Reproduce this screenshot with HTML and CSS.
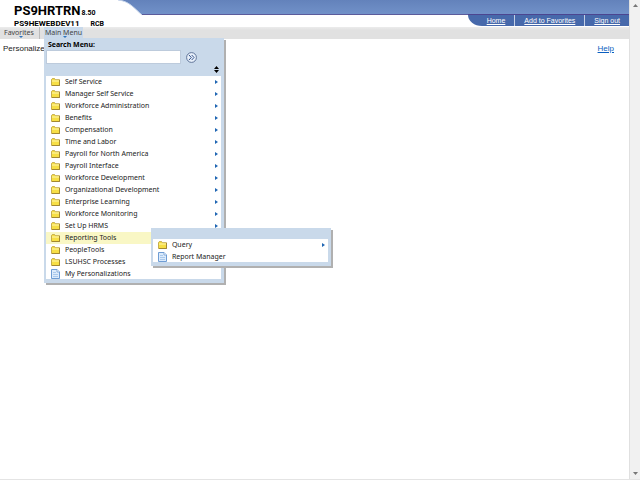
FILE: index.html
```
<!DOCTYPE html>
<html lang="en">
<head>
    <meta charset="UTF-8">
    <meta name="viewport" content="width=device-width, initial-scale=1.0">
    <title>PS9HRTRN</title>
    <link rel="stylesheet" href="styles.css">
</head>
<body>
    <!-- Shared icons -->
    <svg class="sprite" aria-hidden="true">
        <symbol id="folder" viewBox="0 0 9 8">
            <path d="M.5 7.5V1.5L1.3.6H3.6L4.4 1.7H8.5V7.5Z" fill="#f7df45" stroke="#b89c38" stroke-width=".8"/>
            <path d="M1 3H8" stroke="#fff8b0" stroke-width="1"/>
            <path d="M8.6 2V7.6H1" fill="none" stroke="#8f7424" stroke-width=".7"/>
        </symbol>
        <symbol id="page" viewBox="0 0 9 10">
            <path d="M.5.5H6L8.5 3V9.5H.5Z" fill="#dcebfb" stroke="#6f9dd4"/>
            <path d="M6 .5V3H8.5" fill="#fff" stroke="#6f9dd4" stroke-width=".8"/>
            <path d="M2 3.5H5M2 5.5H7M2 7.5H7" stroke="#9dc0e8" stroke-width=".8"/>
        </symbol>
    </svg>

    <div class="page">
        <div class="content">
            <!-- Header -->
            <header class="header">
                <div class="logo">
                    <div class="db-name">PS9HRTRN<span class="version">8.50</span></div>
                    <div class="server"><span>PS9HEWEBDEV11</span><span class="user">RCB</span></div>
                </div>
                <svg class="curve" viewBox="0 0 50 27" aria-hidden="true">
                    <path d="M0 0H4C15 1 20 8 28 15V27H0Z" fill="#fff"/>
                    <path d="M4 0C15 1 20 8 28 15" fill="none" stroke="#c7d5ea"/>
                </svg>
                <nav class="top-links">
                    <a href="#">Home</a>
                    <a href="#">Add to Favorites</a>
                    <a href="#">Sign out</a>
                </nav>
            </header>

            <!-- Menu bar -->
            <div class="menu-bar">
                <button class="menu-button">Favorites</button>
                <div class="menu-wrap">
                    <button class="menu-button active">Main Menu</button>

                    <div class="menu main-menu">
                        <form class="search">
                            <label for="search-menu">Search Menu:</label>
                            <div class="search-row">
                                <input type="text" id="search-menu">
                                <button type="button" class="go" aria-label="Search">
                                    <svg viewBox="0 0 11 11">
                                        <circle cx="5.5" cy="5.5" r="4.9" fill="#e8f0fa" stroke="#53698e" stroke-width=".9"/>
                                        <path d="M3 3L5.3 5.5L3 8M5.7 3L8 5.5L5.7 8" fill="none" stroke="#35548c"/>
                                    </svg>
                                </button>
                            </div>
                            <button type="button" class="sort" aria-label="Sort">
                                <svg viewBox="0 0 5 7"><path d="M0 3L2.5 0L5 3ZM0 4L2.5 7L5 4Z"/></svg>
                            </button>
                        </form>
                        <ul class="items">
                            <li class="sub"><svg class="folder"><use href="#folder"/></svg><a href="#">Self Service</a></li>
                            <li class="sub"><svg class="folder"><use href="#folder"/></svg><a href="#">Manager Self Service</a></li>
                            <li class="sub"><svg class="folder"><use href="#folder"/></svg><a href="#">Workforce Administration</a></li>
                            <li class="sub"><svg class="folder"><use href="#folder"/></svg><a href="#">Benefits</a></li>
                            <li class="sub"><svg class="folder"><use href="#folder"/></svg><a href="#">Compensation</a></li>
                            <li class="sub"><svg class="folder"><use href="#folder"/></svg><a href="#">Time and Labor</a></li>
                            <li class="sub"><svg class="folder"><use href="#folder"/></svg><a href="#">Payroll for North America</a></li>
                            <li class="sub"><svg class="folder"><use href="#folder"/></svg><a href="#">Payroll Interface</a></li>
                            <li class="sub"><svg class="folder"><use href="#folder"/></svg><a href="#">Workforce Development</a></li>
                            <li class="sub"><svg class="folder"><use href="#folder"/></svg><a href="#">Organizational Development</a></li>
                            <li class="sub"><svg class="folder"><use href="#folder"/></svg><a href="#">Enterprise Learning</a></li>
                            <li class="sub"><svg class="folder"><use href="#folder"/></svg><a href="#">Workforce Monitoring</a></li>
                            <li class="sub"><svg class="folder"><use href="#folder"/></svg><a href="#">Set Up HRMS</a></li>
                            <li class="sub open">
                                <svg class="folder"><use href="#folder"/></svg><a href="#">Reporting Tools</a>
                                <div class="menu sub-menu">
                                    <ul class="items">
                                        <li class="sub"><svg class="folder"><use href="#folder"/></svg><a href="#">Query</a></li>
                                        <li><svg class="doc"><use href="#page"/></svg><a href="#">Report Manager</a></li>
                                    </ul>
                                </div>
                            </li>
                            <li class="sub"><svg class="folder"><use href="#folder"/></svg><a href="#">PeopleTools</a></li>
                            <li class="sub"><svg class="folder"><use href="#folder"/></svg><a href="#">LSUHSC Processes</a></li>
                            <li><svg class="doc"><use href="#page"/></svg><a href="#">My Personalizations</a></li>
                        </ul>
                    </div>
                </div>
            </div>

            <!-- Home page links -->
            <main class="home">
                <span>Personalize</span>
                <a href="#">Help</a>
            </main>
        </div>

        <!-- Scroll track -->
        <div class="scroll-track" aria-hidden="true">
            <svg viewBox="0 0 5 3"><path d="M0 3L2.5 0L5 3Z" fill="#777"/></svg>
            <svg viewBox="0 0 5 3"><path d="M0 0L2.5 3L5 0Z" fill="#777"/></svg>
        </div>
    </div>
</body>
</html>
```
FILE: styles.css
```
* {
    box-sizing: border-box;
}

body {
    margin: 0;
    font-family: "Liberation Sans", Arial, sans-serif;
    font-size: 8px;
    color: #222;
    background-color: #fff;
}

button {
    margin: 0;
    padding: 0;
    border: none;
    background: none;
    font: inherit;
    color: inherit;
    cursor: pointer;
}

.sprite {
    display: none;
}

.page {
    display: flex;
    min-height: 100vh;
    border-bottom: 1px solid #e4e4e4;
}

.content {
    flex: 1;
}

/* Header */
.header {
    display: flex;
    height: 27px;
    background: linear-gradient(#6382bb, #7191c8 14px, #5b5b9b 14px, #5b5b9b 15px, #fff 15px);
}

.logo {
    width: 114px;
    padding: 4px 0 0 14px;
    background-color: #fff;
    color: #000;
    font-family: Roboto, Arial, sans-serif;
    font-weight: bold;
    white-space: nowrap;
}

.db-name {
    font-size: 13px;
    line-height: 13px;
}

.version {
    margin-left: 1px;
    font-size: 7px;
}

.server {
    display: flex;
    gap: 11px;
    line-height: 8px;
}

.user {
    font-size: 7px;
}

.curve {
    width: 50px;
    height: 27px;
}

.top-links {
    display: flex;
    align-self: flex-start;
    margin: 14px 0 0 auto;
    height: 12px;
    padding-left: 10px;
    border-top: 1px solid #4c4590;
    border-bottom-left-radius: 14px 11px;
    background-color: #4769ab;
    line-height: 12px;
}

.top-links a {
    padding: 0 9px;
    color: #fff;
    font-size: 7px;
}

.top-links a + a {
    border-left: 1px solid #c5d0e6;
}

/* Menu bar */
.menu-bar {
    display: flex;
    height: 12px;
    padding-left: 3px;
    background: linear-gradient(#ececec, #e1e1e1 3px);
}

.menu-button {
    position: relative;
    height: 11px;
    padding: 0 1px;
    font-family: "Noto Sans", Tahoma, sans-serif;
    font-size: 7px;
    line-height: 10px;
    color: #444;
}

.menu-button::after {
    content: "";
    position: absolute;
    left: 50%;
    bottom: 0;
    border: 2px solid transparent;
    border-top-color: #2f75bd;
    border-bottom: none;
}

.menu-button.active {
    background-color: #c9d9ea;
}

.menu-wrap {
    position: relative;
    margin-left: 4px;
    padding-left: 4px;
    border-left: 1px solid #bbb;
}

/* Drop-down menus */
.menu {
    position: absolute;
    z-index: 1;
    width: 180px;
    padding: 0 3px 4px 2px;
    background-color: #c9d9ea;
    box-shadow: 2px 2px 0 #b0b0b0;
    font-family: "Noto Sans", Tahoma, sans-serif;
    font-size: 7px;
}

.main-menu {
    top: 11px;
    left: 4px;
}

.sub-menu {
    top: -4px;
    left: 105px;
    padding-top: 11px;
}

.search {
    display: flex;
    flex-direction: column;
}

.search label {
    padding: 2px 2px 0;
    color: #000;
    font-weight: bold;
    line-height: 10px;
}

.search-row {
    display: flex;
    align-items: center;
    gap: 5px;
}

.search input {
    width: 135px;
    height: 14px;
    padding: 1px 2px;
    border: 1px solid #bdcbdc;
    font: inherit;
}

.go,
.sort {
    display: flex;
}

.go svg {
    width: 11px;
    height: 11px;
}

.sort {
    align-self: flex-end;
    margin: 2px 2px 3px;
}

.sort svg {
    width: 5px;
    height: 7px;
}

.items {
    margin: 0;
    padding: 0;
    list-style: none;
    background-color: #fff;
}

.items li {
    position: relative;
    display: flex;
    align-items: center;
    gap: 5px;
    height: 11px;
    padding-left: 5px;
    line-height: 12px;
}

.items .sub {
    height: 12px;
}

.items a {
    color: #222;
    text-decoration: none;
    white-space: nowrap;
}

.items .open {
    background-color: #f9f7c5;
}

.sub::after {
    content: "";
    margin: 0 3px 0 auto;
    border: 2px solid transparent;
    border-left: 3px solid #1f66b3;
    border-right: none;
}

.folder {
    width: 9px;
    height: 8px;
}

.doc {
    width: 9px;
    height: 10px;
}

/* Page */
.home {
    display: flex;
    justify-content: space-between;
    padding: 5px 15px 0 3px;
    line-height: 10px;
}

.home a {
    color: #0b5fc0;
}

.scroll-track {
    display: flex;
    flex-direction: column;
    justify-content: space-between;
    align-items: center;
    width: 11px;
    padding: 4px 0;
    border-left: 1px solid #e0e0e0;
    background-color: #f1f1f1;
}

.scroll-track svg {
    width: 5px;
    height: 3px;
}
```
